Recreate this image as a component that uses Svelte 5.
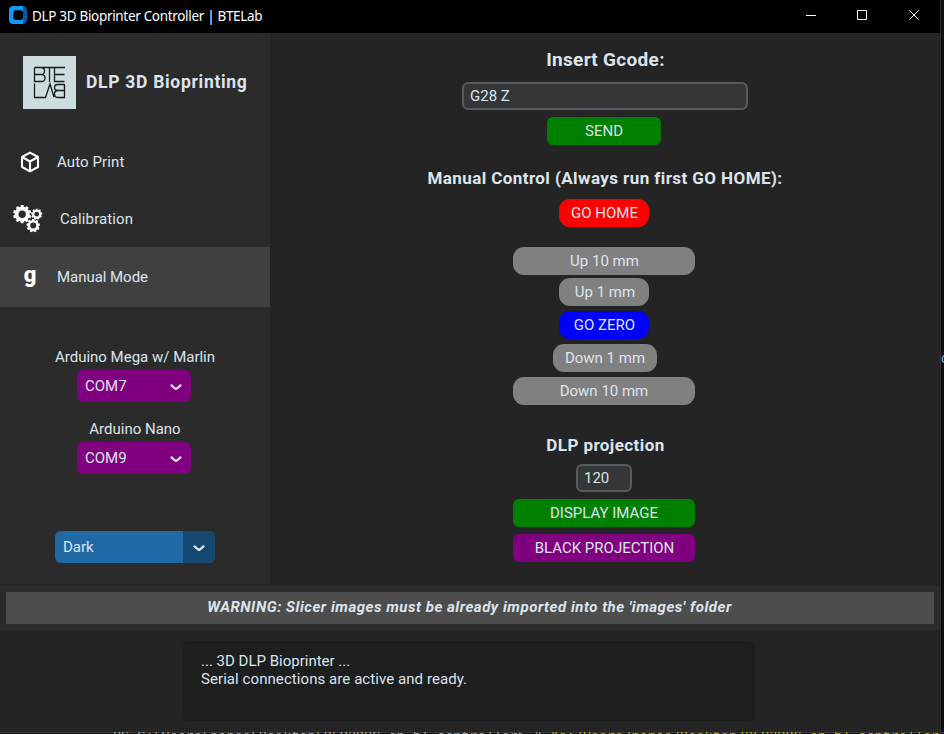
<script>
  const nav = [
    { label: 'Auto Print', icon: 'cube', height: 57 },
    { label: 'Calibration', icon: 'gears', height: 57 },
    { label: 'Manual Mode', icon: 'g', height: 60, active: true }
  ];
  const moves = [
    { label: 'Up 10 mm', width: 182, gap: 20, shift: 1 },
    { label: 'Up 1 mm', width: 90, gap: 3, shift: 2 },
    { label: 'GO ZERO', width: 90, gap: 5, color: '#0000ff', shift: 1 },
    { label: 'Down 1 mm', width: 104, gap: 5, nudge: 2 },
    { label: 'Down 10 mm', width: 182, gap: 5 }
  ];
  function gear(cx, cy, r, hole, teeth) {
    const pts = [];
    const inner = r * 0.82;
    for (let i = 0; i < teeth; i++) {
      for (const [f, rad] of [[-0.32, inner], [-0.24, r], [0.24, r], [0.32, inner]]) {
        const a = ((i + f) / teeth) * Math.PI * 2 - Math.PI / 2;
        pts.push((cx + Math.cos(a) * rad).toFixed(2) + ' ' + (cy + Math.sin(a) * rad).toFixed(2));
      }
    }
    return `M${pts.join('L')}Z M${cx - hole} ${cy}a${hole} ${hole} 0 1 0 ${hole * 2} 0a${hole} ${hole} 0 1 0 ${-hole * 2} 0Z`;
  }
  const gears = gear(9.2, 9.2, 9.2, 3.7, 10) + gear(23.7, 9.2, 5.6, 2.4, 9) + gear(20.2, 20.6, 6.8, 3, 9);
</script>

{#snippet chevron()}
  <svg class="chev" width="12" height="7" viewBox="0 0 12 7"><path d="M1.6 1.4L4.4 4L6 4.9L7.6 4L10.4 1.4" /></svg>
{/snippet}

<div class="desktop">
  <div class="row">
    <div class="window">
      <header>
        <svg width="18" height="18" viewBox="0 0 18 18">
          <rect x="2" width="16" height="18" rx="4.5" fill="#0659a3" />
          <path d="M4.5 0H14V18H4.5Q0 18 0 13.5V4.5Q0 0 4.5 0Z" fill="#0c9bfa" />
          <rect x="4.3" y="4.3" width="9.7" height="9.7" rx="2.4" fill="#000" />
        </svg>
        <span class="title">DLP 3D Bioprinter Controller | BTELab</span>
        <div class="controls">
          <svg width="10" height="11" viewBox="0 0 10 11"><path d="M0 5.5H10" /></svg>
          <svg width="10" height="10" viewBox="0 0 10 10"><path d="M.5 .5H9.5V9.5H.5Z" /></svg>
          <svg class="close" width="10" height="10" viewBox="0 0 10 10"><path d="M.3 .3L9.7 9.7M9.7 .3L.3 9.7" /></svg>
        </div>
      </header>

      <div class="body">
        <aside>
          <div class="brand">
            <svg width="53" height="53" viewBox="0 0 53 53">
              <rect width="53" height="53" fill="#cddcdc" />
              <g fill="none" stroke="#161c1c" stroke-width="1.3">
                <path d="M11.5 11.5H42M11.5 11.5V25.5H18.5Q22 25.5 22 22Q22 18.5 18.5 18.5H11.5M18 11.5Q21.5 11.5 21.5 15Q21.5 18.5 18 18.5M26.5 11.5V26M31.5 11.5V25.5H41.5M31.5 18.5H41.5" />
                <path d="M11.5 27.5V41.5H22.5L27 28L31 41M41.5 28V41.5H35Q31.5 41.5 31.5 38Q31.5 34.5 35 34.5H41.5M34.5 34.5Q31.5 34.5 31.5 31.5Q31.5 28.5 34.5 28.5H41.5" />
              </g>
            </svg>
            <span>DLP 3D Bioprinting</span>
          </div>
          <nav>
            {#each nav as item}
              <div class="item {item.icon}" class:active={item.active} style="height:{item.height}px">
                {#if item.icon === 'cube'}
                  <svg width="20" height="22" viewBox="0 0 20 22"><path d="M10 1.7L18 6V16L10 20.3L2 16V6ZM2 6L10 10.5L18 6M10 10.5V20.5" fill="none" stroke="#fff" stroke-width="2.1" stroke-linejoin="round" /></svg>
                {:else if item.icon === 'gears'}
                  <svg width="30" height="28" viewBox="0 0 30 28"><path d={gears} fill="#fff" fill-rule="evenodd" /></svg>
                {:else}
                  <b>g</b>
                {/if}
                <span>{item.label}</span>
              </div>
            {/each}
          </nav>
          <div class="ports">
            <span class="name">Arduino Mega w/ Marlin</span>
            <div class="select">COM7 {@render chevron()}</div>
            <span class="name">Arduino Nano</span>
            <div class="select">COM9 {@render chevron()}</div>
          </div>
          <div class="theme"><span>Dark</span><i>{@render chevron()}</i></div>
        </aside>

        <main>
          <h1>Insert Gcode:</h1>
          <div class="entry gcode">G28 Z</div>
          <div class="btn send">SEND</div>
          <h2>Manual Control (Always run first GO HOME):</h2>
          <div class="btn round home">GO HOME</div>
          {#each moves as m}
            <div class="btn round" style="width:{m.width}px;margin-top:{m.gap}px;margin-left:{m.nudge ?? 0}px;padding-left:{m.shift ?? 0}px;background:{m.color ?? '#808080'}">{m.label}</div>
          {/each}
          <h3>DLP projection</h3>
          <div class="entry level">120</div>
          <div class="btn display">DISPLAY IMAGE</div>
          <div class="btn black">BLACK PROJECTION</div>
        </main>
      </div>

      <div class="warning"><p>WARNING: Slicer images must be already imported into the 'images' folder</p></div>
      <div class="console">
        <div>... 3D DLP Bioprinter ...</div>
        <div class="ready">Serial connections are active and ready.</div>
      </div>
    </div>
    <div class="edge"><span>c</span></div>
  </div>
  <div class="terminal">PS C:\Users\panos\Desktop\DLP3DBC-on-bl-controller&gt; &amp; <em>"c:/Users/panos/Desktop/DLP3DBC-on-bl-controller/Scripts/Activate"</em></div>
</div>

<style>
  :global(body) { background: #101010; overflow: hidden; }
  .desktop {
    display: flex; flex-direction: column; width: 944px; height: 734px; overflow: hidden; background: #0e0e0e;
    font: 15px/18px Roboto, sans-serif; color: #dce4ee; white-space: nowrap;
  }
  .row { display: flex; height: 732px; flex: none; }
  .window { width: 940px; height: 732px; background: #242424; border-right: 1px solid #303030; display: flex; flex-direction: column; flex: none; }
  header { height: 33px; background: #000; display: flex; align-items: center; padding-left: 9px; box-sizing: border-box; flex: none; color: #fff; }
  header > svg { margin-top: -3px; }
  .title { font: 13.5px/20px "Noto Sans", sans-serif; margin: -1px 0 0 5px; letter-spacing: -0.32px; }
  .controls { margin: -3px 21px 0 auto; display: flex; gap: 41px; align-items: center; }
  .controls svg { fill: none; stroke: #fff; stroke-width: 1; }
  .controls .close { margin-left: 1px; }
  .body { display: flex; height: 551px; flex: none; }
  aside { width: 270px; background: #2b2b2b; display: flex; flex-direction: column; align-items: flex-start; }
  .brand { display: flex; align-items: center; gap: 10px; padding: 23px 0 0 23px; font-size: 17.5px; font-weight: 700; letter-spacing: .7px; }
  .brand span { margin-top: -2px; }
  nav { width: 100%; margin-top: 24px; }
  .item { display: flex; align-items: center; box-sizing: border-box; padding-left: 20px; letter-spacing: .1px; }
  .item.g { letter-spacing: -.04px; }
  .item.cube svg { margin-right: 17px; }
  .item.gears { padding-left: 13px; }
  .item.gears svg { margin-right: 17px; }
  .item b { width: 20px; margin: -5px 17px 0 0; text-align: center; font: 900 22px/20px Roboto, sans-serif; color: #fff; }
  .active { background: #404040; }
  .ports { width: 268px; display: flex; flex-direction: column; align-items: center; margin-top: 41px; }
  .name { padding-left: 2px; }
  .select { width: 114px; height: 32px; background: #800080; border-radius: 6px; display: flex; align-items: center; justify-content: space-between; padding: 0 9px 0 8px; box-sizing: border-box; margin: 4px 0 18px; }
  .chev { fill: none; stroke: #dce4ee; stroke-width: 2.3; stroke-linecap: round; stroke-linejoin: round; margin-top: 2px; }
  .theme { display: flex; width: 160px; height: 32px; margin: 39px 0 0 55px; border-radius: 6px; overflow: hidden; background: #1f6aa5; }
  .theme span { flex: 1; padding-left: 8px; line-height: 32px; }
  .theme i { width: 32px; background: #144870; display: grid; place-items: center; }
  main { width: 668px; display: flex; flex-direction: column; align-items: center; }
  h1, h2, h3, p { margin: 0; font-weight: 700; }
  h1 { font-size: 19px; line-height: 24px; margin-top: 15px; letter-spacing: .3px; padding-left: 3px; }
  h2 { font-size: 17px; line-height: 20px; margin: 23px 0 11px; letter-spacing: .42px; padding-left: 2px; }
  h3 { font-size: 17px; line-height: 20px; margin: 30px 0 9px; letter-spacing: .42px; padding-left: 3px; }
  .entry { height: 28px; box-sizing: border-box; border: 2px solid #565b5e; border-radius: 6px; background: #343638; padding-left: 6px; line-height: 24px; }
  .gcode { width: 286px; margin: 10px 0 7px 2px; }
  .level { width: 56px; }
  .btn { height: 28px; line-height: 28px; text-align: center; border-radius: 6px; box-sizing: border-box; }
  .round { border-radius: 11px; }
  .send { width: 114px; background: #008000; }
  .home { width: 90px; background: #f00; padding-left: 1px; }
  .display { width: 182px; background: #008000; margin-top: 7px; }
  .black { width: 182px; background: #800080; margin-top: 7px; padding-left: 1px; }
  .warning { height: 44px; margin-top: 2px; background: #2b2b2b; flex: none; padding: 6px; box-sizing: border-box; }
  .warning p { height: 32px; background: #4d4d4d; text-align: center; font-size: 15px; font-style: italic; line-height: 30px; width: 928px; letter-spacing: .53px; padding-right: 1px; box-sizing: border-box; }
  .console { width: 572px; height: 80px; margin: 11px 0 0 183px; border-radius: 6px; background: #1d1e1e; padding: 11px 18px; box-sizing: border-box; }
  .ready { letter-spacing: .07px; }
  .edge { width: 3px; overflow: hidden; padding-top: 349px; color: #7aa0c0; }
  .terminal { height: 2px; flex: none; overflow: hidden; padding-left: 113px; background: linear-gradient(#393939 50%, #141414 50%); font: 13.5px/9px "Liberation Mono", monospace; color: #a0a0a0; }
  .terminal em { font-style: normal; color: #b0b020; }
</style>
